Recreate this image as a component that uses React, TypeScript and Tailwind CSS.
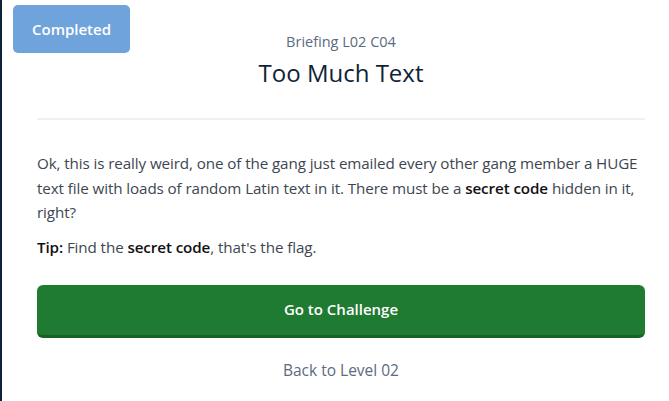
import React from "react";

export default function App() {
  return (
    <div className="w-[669px] h-[401px] bg-white border-l-2 border-[#0d2438] relative overflow-hidden" style={{ fontFamily: "'Open Sans', 'Liberation Sans', sans-serif" }}>
      <div className="absolute left-[11px] top-[5px] w-[117px] h-[48px] rounded-[5px] bg-[#6fa3dc] text-white text-[15px] font-semibold flex items-center justify-center">
        Completed
      </div>
      <div className="pl-[35px] pr-[24px] pt-[31px]">
        <div className="text-center text-[14.5px] leading-[22px] text-[#5b6b80]">Briefing L02 C04</div>
        <h1 className="text-center text-[24px] leading-[32px] mt-[4px] text-[#0f2336]">Too Much Text</h1>
        <div className="mt-[29px] h-[2px] bg-[#eef0f3]" />
        <p className="mt-[31px] text-[15.2px] leading-[24.5px] text-[#3d4650] tracking-[-0.1px]">
          Ok, this is really weird, one of the gang just emailed every other gang member a HUGE text file with loads of random Latin text in it. There must be a <span className="font-semibold text-[#111]">secret code</span> hidden in it, right?
        </p>
        <p className="mt-[10px] text-[15.2px] leading-[24px] text-[#3d4650] tracking-[-0.1px]">
          <span className="font-semibold text-[#111]">Tip:</span> Find the <span className="font-semibold text-[#111]">secret code</span>, that's the flag.
        </p>
        <button className="mt-[26px] w-full h-[53px] rounded-[6px] bg-[#1f7a32] border-b-[3px] border-[#176026] text-white text-[15px] font-semibold">
          Go to Challenge
        </button>
        <div className="mt-[21px] text-center text-[15.5px] text-[#5b6b80]">Back to Level 02</div>
      </div>
    </div>
  );
}
